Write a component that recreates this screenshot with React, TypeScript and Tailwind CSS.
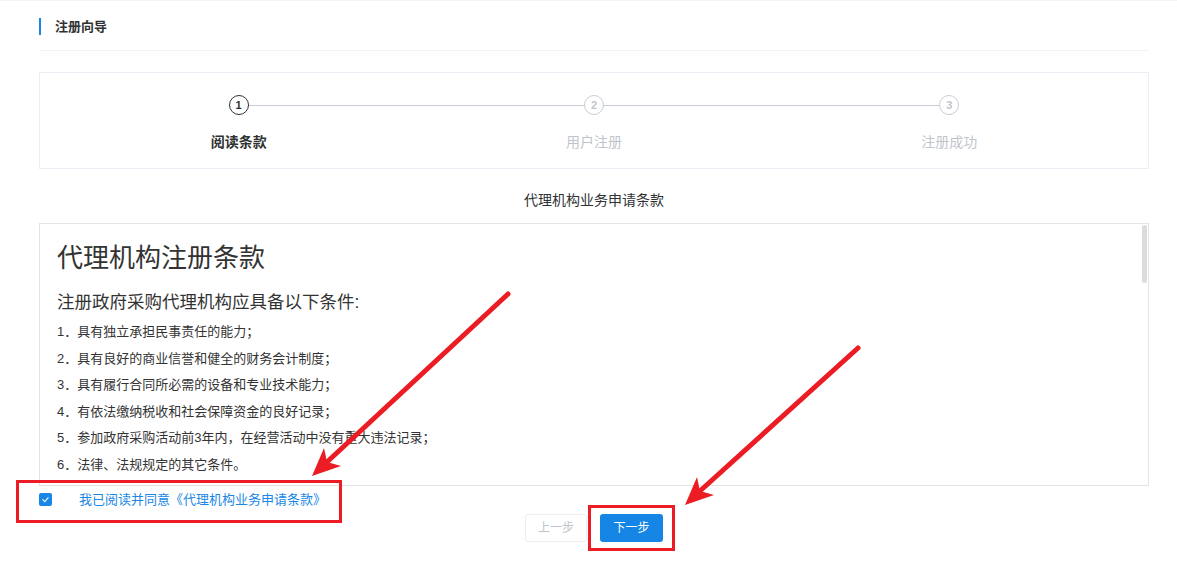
const steps = [
  { no: 1, label: '阅读条款', active: true },
  { no: 2, label: '用户注册', active: false },
  { no: 3, label: '注册成功', active: false }
];

const terms = [
  '具有独立承担民事责任的能力；',
  '具有良好的商业信誉和健全的财务会计制度；',
  '具有履行合同所必需的设备和专业技术能力；',
  '有依法缴纳税收和社会保障资金的良好记录；',
  '参加政府采购活动前3年内，在经营活动中没有重大违法记录；',
  '法律、法规规定的其它条件。'
];

export default function App() {
  return (
    <div
      className="relative min-h-[564px] w-full overflow-hidden border-t border-[#f4f4f4] bg-white pl-[39px] pr-[28px] text-[#303133]"
      style={{ fontFamily: '"Liberation Sans", "Noto Sans CJK SC", sans-serif' }}
    >
      <div className="flex items-center gap-[14px] border-b border-[#f2f2f2] pb-[15px] pt-[17px]">
        <span className="h-[17px] w-[2px] bg-[#1a87e6]" />
        <h1 className="text-[13px] font-bold leading-[17px] text-[#303133]">注册向导</h1>
      </div>

      <div className="mt-[21px] border border-[#ebeef5] px-[21px] pb-[16px] pt-[22px]">
        <div className="flex">
          {steps.map((step, index) => (
            <div key={step.no} className="flex flex-1 flex-col items-center">
              <div className="flex w-full items-center">
                <span className={index > 0 ? 'h-px flex-1 bg-[#c8ccd4]' : 'flex-1'} />
                <span
                  className={
                    step.active
                      ? 'flex h-[20px] w-[20px] items-center justify-center rounded-full border-[1.5px] border-[#303133] text-[11px] font-bold text-[#303133]'
                      : 'flex h-[20px] w-[20px] items-center justify-center rounded-full border-[1.5px] border-[#c8ccd4] text-[11px] font-bold text-[#c0c4cc]'
                  }
                >
                  {step.no}
                </span>
                <span className={index < steps.length - 1 ? 'h-px flex-1 bg-[#c8ccd4]' : 'flex-1'} />
              </div>
              <div
                className={
                  step.active
                    ? 'mt-[17px] text-[14px] font-bold leading-[20px] text-[#303133]'
                    : 'mt-[17px] text-[14px] leading-[20px] text-[#c0c4cc]'
                }
              >
                {step.label}
              </div>
            </div>
          ))}
        </div>
      </div>

      <h2 className="mb-[13px] mt-[21px] text-center text-[14px] leading-[20px] text-[#303133]">代理机构业务申请条款</h2>

      <div className="relative h-[263px] overflow-hidden border border-[#e4e4e4] pl-[17px] pt-[16px] text-[#333]">
        <h3 className="text-[26px] leading-[36px]">代理机构注册条款</h3>
        <h4 className="mt-[13px] text-[17.5px] leading-[26px]">注册政府采购代理机构应具备以下条件:</h4>
        <ol className="mt-[4px] text-[13px] leading-[26.6px]">
          {terms.map((term, index) => (
            <li key={term}>
              {index + 1}．{term}
            </li>
          ))}
        </ol>
        <span className="absolute right-[1px] top-[1px] h-[58px] w-[5px] rounded-full bg-[#dcdcdc]" />
      </div>

      <label className="flex h-[27px] items-center">
        <span className="flex h-[13px] w-[13px] items-center justify-center rounded-[2px] bg-[#1a87e6]">
          <svg width="9" height="9" viewBox="0 0 10 10" fill="none">
            <path d="M2 5.2 4.2 7.3 8 3" stroke="#fff" strokeWidth="1.2" strokeLinecap="round" strokeLinejoin="round" />
          </svg>
        </span>
        <span className="ml-[27px] text-[13px] text-[#1a87e6]">我已阅读并同意《代理机构业务申请条款》</span>
      </label>

      <div className="mt-[1px] flex justify-center gap-[13px]">
        <button type="button" disabled className="h-[28px] w-[62px] rounded-[3px] border border-[#ebeef5] bg-white text-[12px] text-[#c0c4cc]">
          上一步
        </button>
        <button type="button" className="h-[28px] w-[63px] rounded-[3px] bg-[#1585e6] text-[12px] text-white">
          下一步
        </button>
      </div>

      {/* screenshot annotations */}
      <svg className="pointer-events-none absolute left-0 top-0" width="1177" height="564" viewBox="0 0 1177 564">
        <rect x="17.5" y="480.5" width="323" height="40" fill="none" stroke="#ec1c24" strokeWidth="3" />
        <rect x="589.5" y="505.5" width="84" height="43" fill="none" stroke="#ec1c24" strokeWidth="3" />
        <line x1="508" y1="293" x2="327" y2="461" stroke="#ec1c24" strokeWidth="5" strokeLinecap="round" />
        <polygon points="312,475 324,447 327,461 341,465" fill="#ec1c24" />
        <line x1="858" y1="347" x2="700" y2="490" stroke="#ec1c24" strokeWidth="5" strokeLinecap="round" />
        <polygon points="685,504 697,476 700,490 714,494" fill="#ec1c24" />
      </svg>
    </div>
  );
}
